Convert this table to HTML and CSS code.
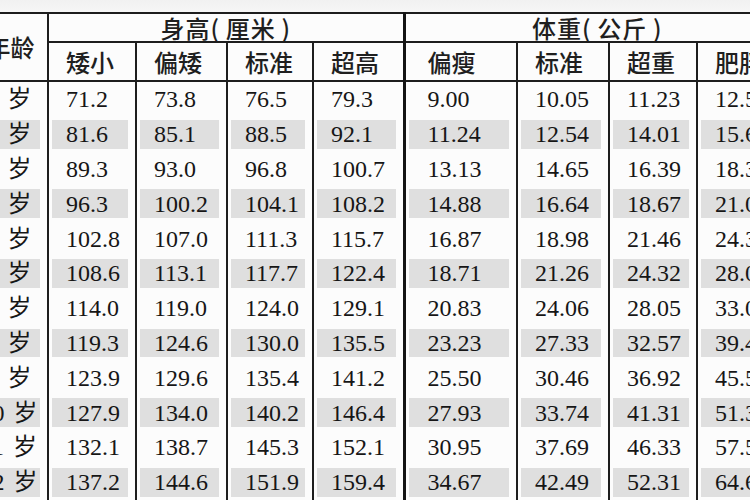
FILE: index.html
```html
<!DOCTYPE html>
<html lang="zh">
<head>
<meta charset="utf-8">
<title>儿童身高体重表</title>
<link rel="stylesheet" href="styles.css">
</head>
<body>
<div class="page">
  <table class="chart">
    <colgroup>
      <col class="c-age">
      <col class="c1"><col class="c2"><col class="c3"><col class="c4">
      <col class="c5"><col class="c6"><col class="c7"><col class="c8">
    </colgroup>
    <thead>
      <tr class="h1">
        <th class="age" rowspan="2">年龄</th>
        <th class="grp" colspan="4">身高(&thinsp;厘米&thinsp;)</th>
        <th class="grp grp-w" colspan="4">体重(&thinsp;公斤&thinsp;)</th>
      </tr>
      <tr class="h2">
        <th>矮小</th><th>偏矮</th><th>标准</th><th>超高</th>
        <th class="sep">偏瘦</th><th>标准</th><th>超重</th><th>肥胖</th>
      </tr>
    </thead>
    <tbody>
      <tr><td class="age">1 岁</td><td>71.2</td><td>73.8</td><td>76.5</td><td>79.3</td><td class="sep">9.00</td><td>10.05</td><td>11.23</td><td>12.52</td></tr>
      <tr class="g"><td class="age">2 岁</td><td>81.6</td><td>85.1</td><td>88.5</td><td>92.1</td><td class="sep">11.24</td><td>12.54</td><td>14.01</td><td>15.67</td></tr>
      <tr><td class="age">3 岁</td><td>89.3</td><td>93.0</td><td>96.8</td><td>100.7</td><td class="sep">13.13</td><td>14.65</td><td>16.39</td><td>18.37</td></tr>
      <tr class="g"><td class="age">4 岁</td><td>96.3</td><td>100.2</td><td>104.1</td><td>108.2</td><td class="sep">14.88</td><td>16.64</td><td>18.67</td><td>21.01</td></tr>
      <tr><td class="age">5 岁</td><td>102.8</td><td>107.0</td><td>111.3</td><td>115.7</td><td class="sep">16.87</td><td>18.98</td><td>21.46</td><td>24.38</td></tr>
      <tr class="g"><td class="age">6 岁</td><td>108.6</td><td>113.1</td><td>117.7</td><td>122.4</td><td class="sep">18.71</td><td>21.26</td><td>24.32</td><td>28.03</td></tr>
      <tr><td class="age">7 岁</td><td>114.0</td><td>119.0</td><td>124.0</td><td>129.1</td><td class="sep">20.83</td><td>24.06</td><td>28.05</td><td>33.08</td></tr>
      <tr class="g"><td class="age">8 岁</td><td>119.3</td><td>124.6</td><td>130.0</td><td>135.5</td><td class="sep">23.23</td><td>27.33</td><td>32.57</td><td>39.41</td></tr>
      <tr><td class="age">9 岁</td><td>123.9</td><td>129.6</td><td>135.4</td><td>141.2</td><td class="sep">25.50</td><td>30.46</td><td>36.92</td><td>45.52</td></tr>
      <tr class="g"><td class="age">10 岁</td><td>127.9</td><td>134.0</td><td>140.2</td><td>146.4</td><td class="sep">27.93</td><td>33.74</td><td>41.31</td><td>51.38</td></tr>
      <tr><td class="age">11 岁</td><td>132.1</td><td>138.7</td><td>145.3</td><td>152.1</td><td class="sep">30.95</td><td>37.69</td><td>46.33</td><td>57.58</td></tr>
      <tr class="g"><td class="age">12 岁</td><td>137.2</td><td>144.6</td><td>151.9</td><td>159.4</td><td class="sep">34.67</td><td>42.49</td><td>52.31</td><td>64.68</td></tr>
    </tbody>
  </table>
</div>
</body>
</html>
```
FILE: styles.css
```css
html, body {
  margin: 0;
  padding: 0;
  background: #fbfbfb;
}

.page {
  width: 750px;
  height: 500px;
  overflow: hidden;
  background: linear-gradient(#f1f1f1, #f6f6f6) top / 100% 12px no-repeat, #fcfcfc;
}

.chart {
  margin: 12px 0 0 -26px;
  width: 816px;
  table-layout: fixed;
  border-collapse: collapse;
  color: #161616;
}

.c-age { width: 74px; }
.c1 { width: 88px; }
.c2 { width: 91px; }
.c3 { width: 86px; }
.c4 { width: 91px; }
.c5 { width: 113px; }
.c6 { width: 92px; }
.c7 { width: 88px; }
.c8 { width: 93px; }

.chart th,
.chart td {
  padding: 0 0 0 17px;
  text-align: left;
  vertical-align: middle;
  white-space: nowrap;
  border-left: 2px solid #1d1d1d;
  border-right: 2px solid #1d1d1d;
  line-height: 1;
}

.chart th {
  font-family: "Noto Sans CJK SC", "Noto Sans", sans-serif;
  font-size: 24px;
  font-weight: 500;
  color: #1f1f1f;
}

.h1 th {
  height: 27px;
  border-top: 2px solid #1d1d1d;
  border-bottom: 2px solid #1d1d1d;
}

.h1 .grp {
  text-align: center;
  padding: 0;
  letter-spacing: 1px;
}

.h2 th {
  height: 37px;
  border-bottom: 2px solid #1d1d1d;
}

.chart .age {
  text-align: center;
  padding: 0;
  border-left: none;
}

.chart th.age {
  border-bottom: 2px solid #1d1d1d;
}

.chart .sep,
.chart .grp-w {
  border-left: 3px solid #141414;
}

.chart td.sep,
.chart th.sep {
  padding-left: 22px;
}

.chart td {
  height: 34.8px;
  font-family: "Liberation Serif", "Times New Roman", serif;
  font-size: 24px;
}

.chart td.age {
  font-family: "Liberation Serif", "Noto Sans CJK SC", serif;
  word-spacing: 3px;
  padding-right: 3px;
}

.chart tr.g td {
  background: linear-gradient(#dfdfdf, #dfdfdf) 3px center / calc(100% - 10px) calc(100% - 6px) no-repeat;
}
```
